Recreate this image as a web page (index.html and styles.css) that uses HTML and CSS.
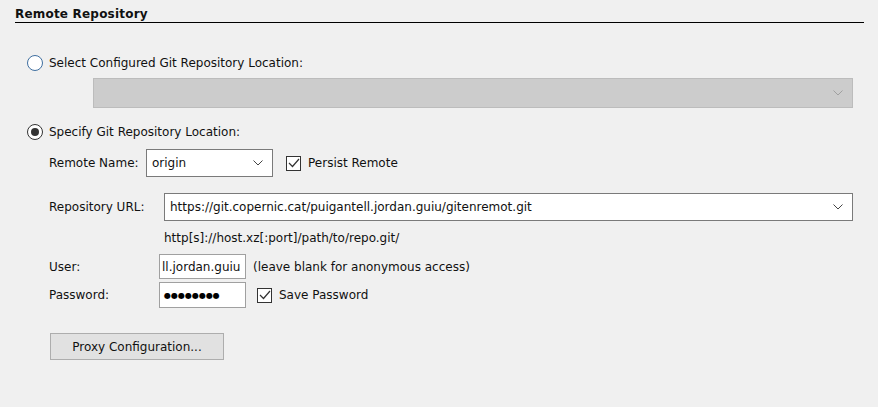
FILE: index.html
```html
<!DOCTYPE html>
<html>
<head>
<meta charset="utf-8">
<link rel="stylesheet" href="styles.css">
</head>
<body>
<div class="panel">
  <div class="title">Remote Repository</div>

  <div class="radio-row first">
    <span class="radio"></span>
    <span class="label">Select Configured Git Repository Location:</span>
  </div>
  <div class="combo disabled wide">
    <span class="combo-text"></span>
    <svg class="chev" width="10" height="6" viewBox="0 0 10 6"><path d="M0.5 0.5 L5 5 L9.5 0.5" fill="none" stroke="#a0a0a0" stroke-width="1"/></svg>
  </div>

  <div class="radio-row second">
    <span class="radio checked"><span class="dot"></span></span>
    <span class="label">Specify Git Repository Location:</span>
  </div>

  <div class="field-row remote">
    <span class="label name-label">Remote Name:</span>
    <div class="combo small">
      <span class="combo-text">origin</span>
      <svg class="chev" width="10" height="6" viewBox="0 0 10 6"><path d="M0.5 0.5 L5 5 L9.5 0.5" fill="none" stroke="#444" stroke-width="1"/></svg>
    </div>
    <span class="check"><svg width="12" height="10" viewBox="0 0 12 10"><path d="M1 5 L4.5 8.5 L11 1" fill="none" stroke="#333" stroke-width="1.2"/></svg></span>
    <span class="label">Persist Remote</span>
  </div>

  <div class="field-row url">
    <span class="label url-label">Repository URL:</span>
    <div class="combo url-combo">
      <span class="combo-text">https://git.copernic.cat/puigantell.jordan.guiu/gitenremot.git</span>
      <svg class="chev" width="10" height="6" viewBox="0 0 10 6"><path d="M0.5 0.5 L5 5 L9.5 0.5" fill="none" stroke="#444" stroke-width="1"/></svg>
    </div>
  </div>
  <div class="hint">http[s]://host.xz[:port]/path/to/repo.git/</div>

  <div class="field-row user">
    <span class="label user-label">User:</span>
    <div class="input"><span class="clip">ll.jordan.guiu</span></div>
    <span class="label after">(leave blank for anonymous access)</span>
  </div>
  <div class="field-row pass">
    <span class="label user-label">Password:</span>
    <div class="input dots">&#9679;&#9679;&#9679;&#9679;&#9679;&#9679;&#9679;&#9679;</div>
    <span class="check"><svg width="12" height="10" viewBox="0 0 12 10"><path d="M1 5 L4.5 8.5 L11 1" fill="none" stroke="#333" stroke-width="1.2"/></svg></span>
    <span class="label">Save Password</span>
  </div>

  <button class="btn">Proxy Configuration...</button>
</div>
</body>
</html>
```
FILE: styles.css
```css
html, body {
  margin: 0;
  padding: 0;
  background: #f0f0f0;
}
body {
  font-family: "DejaVu Sans", Verdana, sans-serif;
  font-size: 12px;
  color: #111;
  width: 878px;
  height: 407px;
  overflow: hidden;
}
.panel {
  padding: 6px 14px 0 15px;
}
.title {
  font-weight: bold;
  font-size: 12px;
  letter-spacing: 0.2px;
  height: 16px;
  line-height: 16px;
  border-bottom: 1px solid #000;
}
.label {
  white-space: nowrap;
}
.radio-row {
  display: flex;
  align-items: center;
  height: 16px;
  margin-left: 12px;
}
.radio-row.first { margin-top: 32px; }
.radio-row.second { margin-top: 16px; }
.radio {
  box-sizing: border-box;
  width: 16px;
  height: 16px;
  border: 1px solid #3f6fa0;
  border-radius: 50%;
  background: #fff;
  margin-right: 6px;
  display: flex;
  align-items: center;
  justify-content: center;
  flex: none;
}
.radio.checked {
  border-color: #333;
}
.dot {
  width: 8px;
  height: 8px;
  border-radius: 50%;
  background: #333;
}
.combo {
  box-sizing: border-box;
  display: flex;
  align-items: center;
  border: 1px solid #7a7a7a;
  background: #fff;
  padding: 0 9px 0 5px;
}
.combo-text {
  flex: 1;
  white-space: nowrap;
  overflow: hidden;
}
.chev { flex: none; }
.combo.disabled {
  background: #cccccc;
  border-color: #bcbcbc;
}
.combo.wide {
  margin: 7px 0 0 78px;
  width: 760px;
  height: 30px;
}
.field-row {
  display: flex;
  align-items: center;
  margin-left: 34px;
}
.field-row.remote {
  margin-top: 9px;
  height: 28px;
}
.name-label { width: 97px; }
.combo.small {
  width: 127px;
  height: 28px;
}
.check {
  box-sizing: border-box;
  width: 15px;
  height: 15px;
  border: 1px solid #333;
  background: #fff;
  display: flex;
  align-items: center;
  justify-content: center;
  margin: 0 7px 0 13px;
  flex: none;
}
.field-row.url {
  margin-top: 16px;
  height: 28px;
}
.url-label { width: 115px; }
.combo.url-combo {
  width: 689px;
  height: 28px;
}
.hint {
  margin: 9px 0 0 149px;
  height: 16px;
  line-height: 16px;
}
.field-row.user {
  margin-top: 8px;
  height: 25px;
}
.field-row.pass {
  margin-top: 3px;
  height: 26px;
}
.user-label { width: 110px; }
.input {
  box-sizing: border-box;
  width: 87px;
  height: 100%;
  border: 1px solid #a0a0a0;
  background: #fff;
  display: flex;
  align-items: center;
  padding: 0 2px;
  overflow: hidden;
  white-space: nowrap;
  margin-right: 7px;
  flex: none;
}
.input.dots {
  font-size: 8px;
  letter-spacing: 0;
  padding-left: 4px;
  margin-right: 0;
  color: #000;
}
.field-row.pass .check { margin-left: 11px; }
.btn {
  display: block;
  box-sizing: border-box;
  margin: 25px 0 0 35px;
  width: 174px;
  height: 27px;
  background: #e1e1e1;
  border: 1px solid #adadad;
  font-family: inherit;
  font-size: 12px;
  color: #111;
  padding: 0;
}
```
